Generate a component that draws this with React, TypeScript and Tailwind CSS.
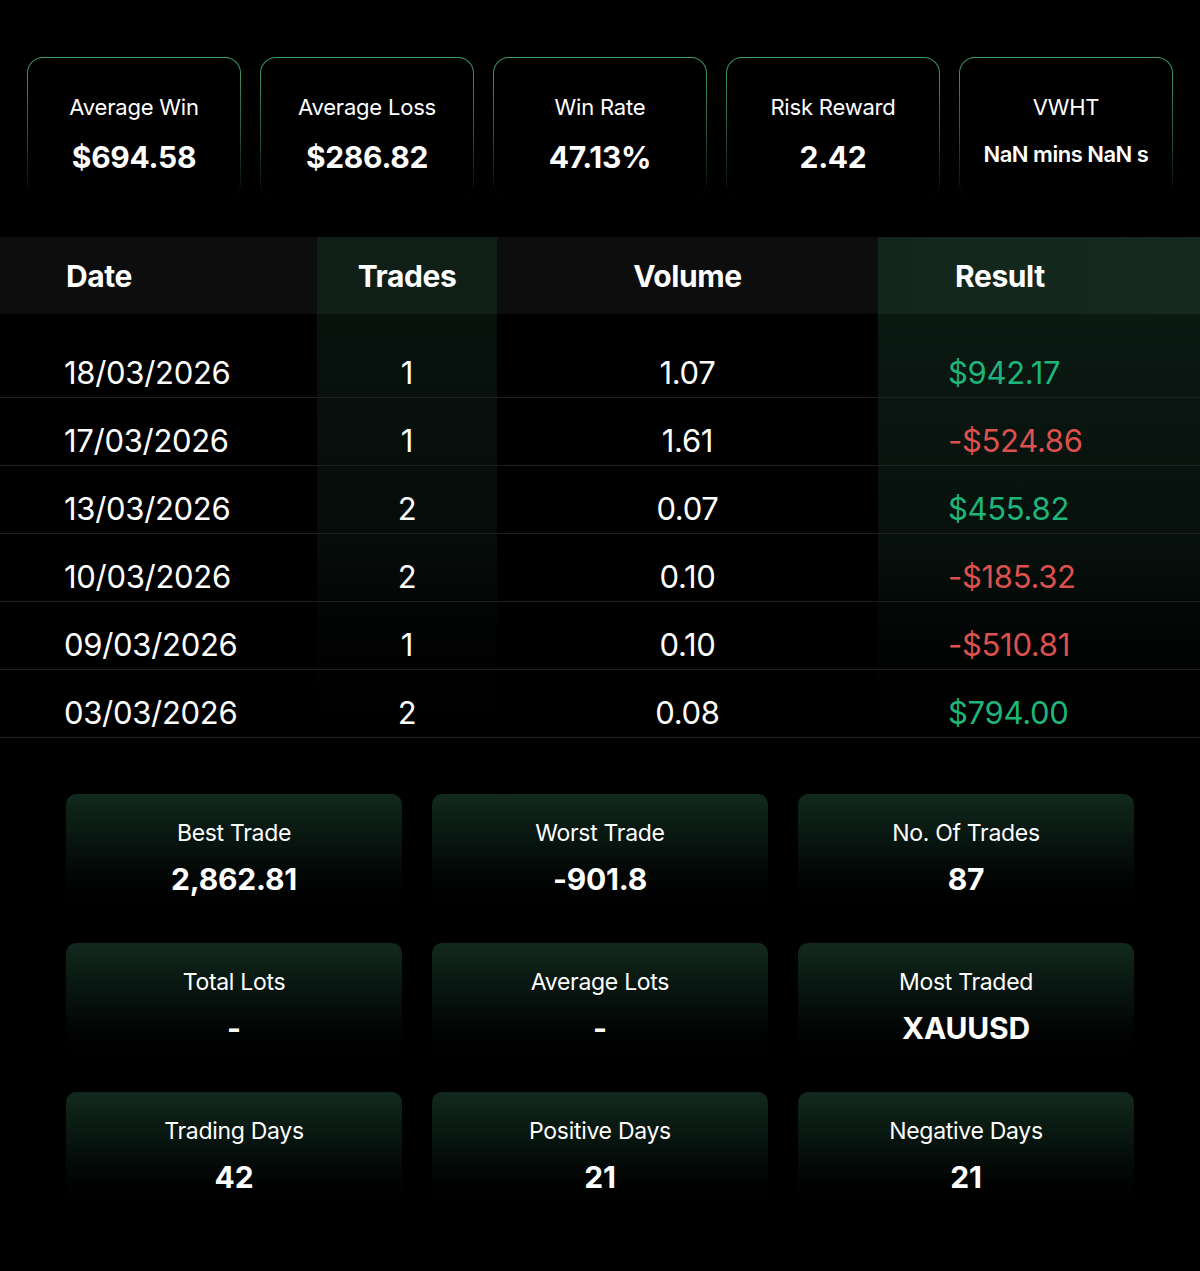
const topStats = [
  { label: 'Average Win', value: '$694.58' },
  { label: 'Average Loss', value: '$286.82' },
  { label: 'Win Rate', value: '47.13%' },
  { label: 'Risk Reward', value: '2.42' },
  { label: 'VWHT', value: 'NaN mins NaN s', small: true },
];

const rows = [
  { date: '18/03/2026', trades: 1, volume: '1.07', result: '$942.17', win: true },
  { date: '17/03/2026', trades: 1, volume: '1.61', result: '-$524.86', win: false },
  { date: '13/03/2026', trades: 2, volume: '0.07', result: '$455.82', win: true },
  { date: '10/03/2026', trades: 2, volume: '0.10', result: '-$185.32', win: false },
  { date: '09/03/2026', trades: 1, volume: '0.10', result: '-$510.81', win: false },
  { date: '03/03/2026', trades: 2, volume: '0.08', result: '$794.00', win: true },
];

const summary = [
  { label: 'Best Trade', value: '2,862.81' },
  { label: 'Worst Trade', value: '-901.8' },
  { label: 'No. Of Trades', value: '87' },
  { label: 'Total Lots', value: '-' },
  { label: 'Average Lots', value: '-' },
  { label: 'Most Traded', value: 'XAUUSD' },
  { label: 'Trading Days', value: '42' },
  { label: 'Positive Days', value: '21' },
  { label: 'Negative Days', value: '21' },
];

function TopCard({ label, value, small }: { label: string; value: string; small?: boolean }) {
  return (
    <div className="w-[214px] h-[142px] rounded-[16px] p-px bg-gradient-to-b from-[#3f9e6b] via-[#2c5a44] to-transparent">
      <div className="h-full rounded-[15px] bg-black flex flex-col items-center pt-[33px]">
        <span className="text-[22px] leading-[32px] text-white tracking-[-0.2px]">{label}</span>
        <span
          className={
            small
              ? 'mt-[15px] text-[22px] leading-[32px] font-semibold text-white tracking-[-0.5px]'
              : 'mt-[16px] text-[30px] leading-[36px] font-bold text-white tracking-[-0.3px]'
          }
        >
          {value}
        </span>
      </div>
    </div>
  );
}

function Column({
  title,
  values,
  width,
  align,
  headBg,
  bodyBg,
  headPad,
  cellPad,
}: {
  title: string;
  values: { text: string; className?: string }[];
  width: string;
  align: 'left' | 'center';
  headBg: string;
  bodyBg: string;
  headPad: string;
  cellPad: string;
}) {
  const justify = align === 'center' ? 'justify-center' : 'justify-start';
  return (
    <div className={`${width} flex flex-col`}>
      <div className={`h-[77px] flex items-center pt-[2px] ${justify} ${headPad} ${headBg}`}>
        <span className="text-[30px] font-bold text-white tracking-[-0.4px]">{title}</span>
      </div>
      <div className={`flex-1 flex flex-col pt-4 ${bodyBg}`}>
        {values.map((v, i) => (
          <div
            key={i}
            className={`h-[68px] shrink-0 flex items-center pt-[19px] ${justify} ${cellPad} border-b border-[#1e1f1e]`}
          >
            <span className={`text-[31px] tracking-[-0.3px] ${v.className ?? 'text-white'}`}>{v.text}</span>
          </div>
        ))}
      </div>
    </div>
  );
}

function SummaryCard({ label, value }: { label: string; value: string }) {
  return (
    <div className="h-[130px] rounded-[10px] bg-gradient-to-b from-[#12291e] via-[#040b08] via-55% to-black flex flex-col items-center pt-[23px]">
      <span className="text-[23px] leading-[32px] text-white tracking-[-0.3px]">{label}</span>
      <span className="mt-[12px] text-[30px] leading-[36px] font-bold text-white tracking-[-0.2px]">{value}</span>
    </div>
  );
}

export default function App() {
  return (
    <div className="w-full min-h-[1271px] bg-black text-white font-['Inter',sans-serif]">
      {/* Top stats */}
      <div className="flex gap-[19px] px-[27px] pt-[57px]">
        {topStats.map((s) => (
          <TopCard key={s.label} {...s} />
        ))}
      </div>

      {/* Daily table */}
      <div className="mt-[38px] flex h-[557px]">
        <Column
          title="Date"
          width="w-[317px]"
          align="left"
          headBg="bg-[#0d0d0d]"
          bodyBg="bg-black"
          headPad="pl-[66px]"
          cellPad="pl-[64px]"
          values={rows.map((r) => ({ text: r.date }))}
        />
        <Column
          title="Trades"
          width="w-[180px]"
          align="center"
          headBg="bg-[#0f1f18]"
          bodyBg="bg-gradient-to-b from-[#08130e] via-[#060c09] to-black"
          headPad=""
          cellPad=""
          values={rows.map((r) => ({ text: String(r.trades) }))}
        />
        <Column
          title="Volume"
          width="w-[381px]"
          align="center"
          headBg="bg-[#0d0d0d]"
          bodyBg="bg-black"
          headPad=""
          cellPad=""
          values={rows.map((r) => ({ text: r.volume }))}
        />
        <Column
          title="Result"
          width="flex-1"
          align="left"
          headBg="bg-gradient-to-r from-[#12261c] to-[#15291f]"
          bodyBg="bg-gradient-to-b from-[#0b1913] via-[#07100c] to-black"
          headPad="pl-[77px]"
          cellPad="pl-[70px]"
          values={rows.map((r) => ({
            text: r.result,
            className: r.win ? 'text-[#1fb57a]' : 'text-[#dc514e]',
          }))}
        />
      </div>

      {/* Summary */}
      <div className="grid grid-cols-3 gap-x-[30px] gap-y-[19px] px-[66px] w-[1200px]">
        {summary.map((s) => (
          <SummaryCard key={s.label} {...s} />
        ))}
      </div>
    </div>
  );
}
